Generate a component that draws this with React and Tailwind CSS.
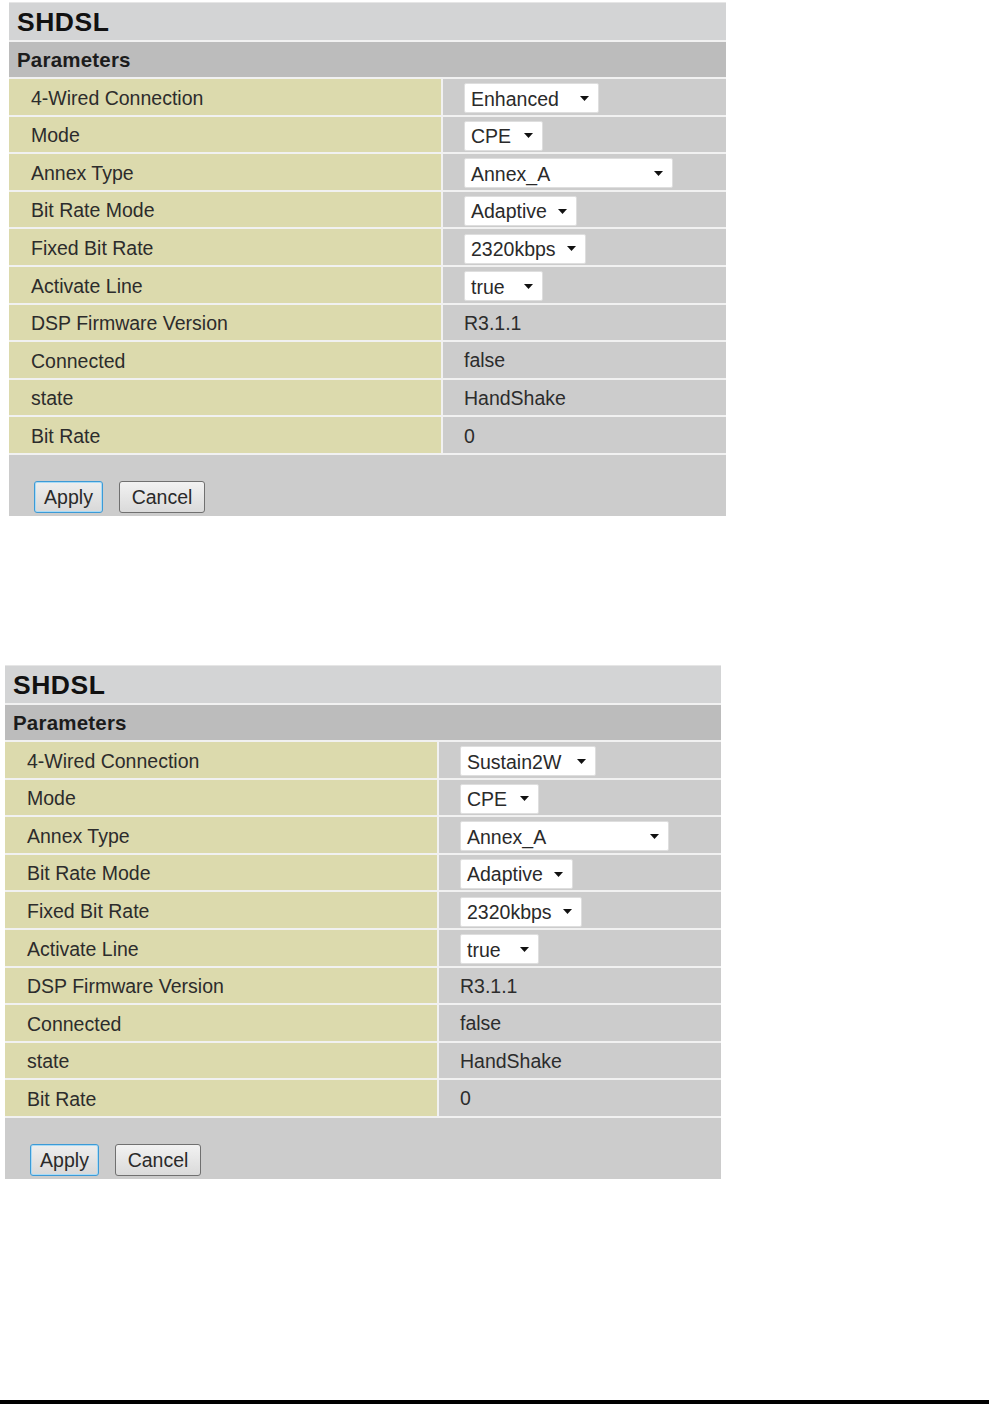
import React from "react";

const FONT = { fontFamily: '"Liberation Sans", Arial, Helvetica, sans-serif' };

const Caret = () => (
  <svg width="9" height="5" viewBox="0 0 9 5" className="shrink-0">
    <polygon points="0,0 9,0 4.5,5" fill="#111" />
  </svg>
);

const Select = ({ value, width }) => (
  <div
    className={`flex items-center justify-between h-[30px] mt-[1px] bg-white border border-[#dedede] rounded-[2px] pl-[6px] pr-[9px] text-[19.5px] text-[#2a2a2a] ${width}`}
  >
    <span className="pt-[2px]">{value}</span>
    <Caret />
  </div>
);

const Row = ({ label, children }) => (
  <div className="flex h-[37.6px] border-b-2 border-[#f1f1f1]">
    <div className="w-[432px] shrink-0 bg-[#dcdaad] flex items-center pl-[22px] pt-[3px] text-[19.5px] text-[#2c2c2c]">
      {label}
    </div>
    <div className="w-[2px] shrink-0 bg-[#f1f1f1]" />
    <div className="flex-1 bg-[#cccccc] flex items-center pl-[21px] pt-[2px] text-[19.5px] text-[#2c2c2c]">
      {children}
    </div>
  </div>
);

const Panel = ({ wired, className }) => {
  const rows = [
    ["4-Wired Connection", <Select value={wired} width={wired === "Enhanced" ? "w-[135px]" : "w-[136px]"} />],
    ["Mode", <Select value="CPE" width="w-[79px]" />],
    ["Annex Type", <Select value="Annex_A" width="w-[209px]" />],
    ["Bit Rate Mode", <Select value="Adaptive" width="w-[113px]" />],
    ["Fixed Bit Rate", <Select value="2320kbps" width="w-[122px]" />],
    ["Activate Line", <Select value="true" width="w-[79px]" />],
    ["DSP Firmware Version", "R3.1.1"],
    ["Connected", "false"],
    ["state", "HandShake"],
    ["Bit Rate", "0"],
  ];
  return (
    <div className={`flex flex-col ${className}`}>
      <div className="h-[38px] bg-[#d3d4d5] border-t border-[#e6e6e6] flex items-center pl-[8px] pt-[2px] text-[26.5px] font-bold tracking-[0.5px] text-[#111]">
        SHDSL
      </div>
      <div className="h-[2px] bg-[#f1f1f1]" />
      <div className="h-[35px] bg-[#bcbcbc] flex items-center pl-[8px] pt-[2px] text-[20.5px] font-bold tracking-[0.2px] text-[#1c1c1c]">
        Parameters
      </div>
      <div className="h-[2px] bg-[#f1f1f1]" />
      {rows.map(([label, value]) => (
        <Row key={label} label={label}>
          {value}
        </Row>
      ))}
      <div className="h-[61px] bg-[#cccccc] flex items-start pt-[26px] pl-[25px] gap-[16px]">
        <button className="h-[32px] w-[69px] rounded-[3px] border border-[#3c9ad6] shadow-[inset_0_0_0_1px_#a9daf5] bg-gradient-to-b from-[#eeeeee] to-[#d8d8d8] text-[19.5px] pt-[1px] text-[#2a2a2a]">
          Apply
        </button>
        <button className="h-[32px] w-[86px] rounded-[3px] border border-[#707070] bg-gradient-to-b from-[#f2f2f2] to-[#dadada] text-[19.5px] pt-[1px] text-[#2a2a2a]">
          Cancel
        </button>
      </div>
    </div>
  );
};

export default function App() {
  return (
    <div className="w-[989px] h-[1404px] bg-white flex flex-col" style={FONT}>
      <Panel wired="Enhanced" className="w-[717px] ml-[9px] mt-[2px]" />
      <Panel wired="Sustain2W" className="w-[716px] ml-[5px] mt-[149px]" />
      <div className="flex-1" />
      <div className="h-[4px] bg-black" />
    </div>
  );
}
